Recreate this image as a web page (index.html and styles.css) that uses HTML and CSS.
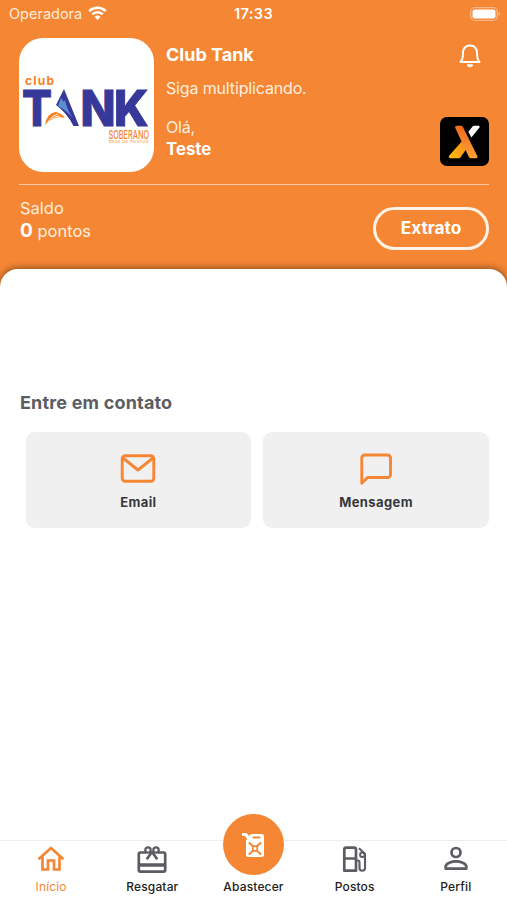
FILE: index.html
```html
<!DOCTYPE html>
<html lang="pt-BR">
<head>
  <meta charset="UTF-8" />
  <meta name="viewport" content="width=device-width, initial-scale=1.0"/>
  <title>Club Tank</title>
  <link rel="stylesheet" href="styles.css">
</head>
<body>

<header class="header">
  <div class="status-bar">
    <div class="carrier">
      <span>Operadora</span>
      <svg width="19" height="15" viewBox="0 0 19 15">
        <g fill="none" stroke="#fff" stroke-width="2.7">
          <path d="M1.2 5.1a12 12 0 0 1 16.6 0"/>
          <path d="M4.2 8.4a7.6 7.6 0 0 1 10.6 0"/>
        </g>
        <path d="M9.5 14l-3-3.1a4.3 4.3 0 0 1 6 0z" fill="#fff"/>
      </svg>
    </div>
    <div class="clock">17:33</div>
    <svg class="battery" width="31" height="14" viewBox="0 0 31 14">
      <rect x=".7" y=".7" width="26.6" height="12.6" rx="4" fill="none" stroke="#fff" stroke-opacity=".4" stroke-width="1.3"/>
      <rect x="2.5" y="2.5" width="23" height="9" rx="2.3" fill="#fff"/>
      <path d="M28.5 5v4q1.7-.6 1.7-2t-1.7-2z" fill="#fff" fill-opacity=".45"/>
    </svg>
  </div>

  <div class="brand">
    <div class="logo">
      <svg width="135" height="134" viewBox="0 0 135 134">
        <text class="logo-club" x="6" y="47" textLength="29">club</text>
        <g class="logo-tank">
          <text x="3" y="87.5" textLength="30" lengthAdjust="spacingAndGlyphs">T</text>
          <text x="61.5" y="87.5" textLength="35" lengthAdjust="spacingAndGlyphs">N</text>
          <text x="95" y="87.5" textLength="34.5" lengthAdjust="spacingAndGlyphs">K</text>
        </g>
        <path d="M45 51L60 88H54.5Q48 75 37 67z" fill="#36389a"/>
        <path d="M42 60l3 4 1-2q2 10 8 18-7-8-15-12z" fill="#5b8fd0"/>
        <path d="M26 87Q28 75 36.5 74q6 1 9.5 6-11-3-20 7z" fill="#f5821f"/>
        <path d="M29 84q4-7 10-8M33 81q4-3 8-3" fill="none" stroke="#fff" stroke-width=".9"/>
        <text class="logo-soberano" x="89.5" y="100.5" textLength="40.5" lengthAdjust="spacingAndGlyphs">SOBERANO</text>
        <text class="logo-rede" x="90" y="105" textLength="39.5">REDE DE POSTOS</text>
      </svg>
    </div>
    <div class="welcome">
      <h1>Club Tank</h1>
      <p class="slogan">Siga multiplicando.</p>
      <p class="hello">Olá,</p>
      <p class="user">Teste</p>
    </div>
    <div class="brand-side">
      <svg class="bell" width="22" height="24" viewBox="0 0 22 24" fill="none" stroke="#fff" stroke-width="2" stroke-linejoin="round" stroke-linecap="round">
        <path d="M1.5 18H20.5C18.3 16 18.1 14 18.1 10C18.1 4.5 15.5 1.5 11 1.5S3.9 4.5 3.9 10C3.9 14 3.7 16 1.5 18z"/>
        <path d="M9 21.2q2 2 4 0z" fill="#fff"/>
      </svg>
      <svg class="x-logo" width="49" height="49" viewBox="0 0 50 50">
        <defs>
          <linearGradient id="amber" x1="0" y1="1" x2="1" y2="0">
            <stop offset="0" stop-color="#ffc20e"/>
            <stop offset="1" stop-color="#f5821f"/>
          </linearGradient>
          <linearGradient id="flame" x1="0" y1="0" x2="0" y2="1">
            <stop offset="0" stop-color="#f26a1b"/>
            <stop offset="1" stop-color="#f9a13a"/>
          </linearGradient>
        </defs>
        <rect width="50" height="50" rx="7" fill="#000"/>
        <path d="M38.5 9h1q1.7.2.7 1.8L32 21l-3-6 3.8-4.8Q33.8 9 35 9z" fill="#fff"/>
        <path d="M23 24l5 7-6.5 9.2Q20.8 42 19 42h-8.5q-2.5-.5-1-2.7z" fill="url(#amber)"/>
        <path d="M17 9h4.5q1.3 0 2 1.5L38.2 40q.5 2-1.2 2h-5.7q-1.3 0-2-1.5L15.5 11q-.6-2 1.5-2z" fill="url(#flame)"/>
      </svg>
    </div>
  </div>

  <div class="balance">
    <div class="points">
      <div>Saldo</div>
      <div><b>0</b> pontos</div>
    </div>
    <button class="statement">Extrato</button>
  </div>
</header>

<main class="sheet">
  <h2>Entre em contato</h2>
  <div class="contacts">
    <a class="card">
      <svg width="36" height="30" viewBox="0 0 36 30" fill="none" stroke="#f58634" stroke-width="2.9" stroke-linejoin="round" stroke-linecap="round">
        <rect x="2.2" y="2.7" width="31.6" height="25.6" rx="3"/>
        <path d="M3 5L18 17 33 5"/>
      </svg>
      <span>Email</span>
    </a>
    <a class="card">
      <svg width="34" height="32" viewBox="0 0 34 32" fill="none" stroke="#f58634" stroke-width="2.9" stroke-linejoin="round">
        <path d="M2.8 30.2V5a3 3 0 0 1 3-3H28.5a3 3 0 0 1 3 3V21.5a3 3 0 0 1-3 3H8.5z"/>
      </svg>
      <span>Mensagem</span>
    </a>
  </div>
</main>

<nav class="tabs">
  <a class="tab active">
    <svg width="28" height="26" viewBox="0 0 28 26" fill="none" stroke="currentColor" stroke-width="2.7">
      <path d="M1.5 13.2L14 2 26.5 13.2"/>
      <path d="M5.5 10.5V23.5H11V14.5H17V23.5H22.5V10.5"/>
    </svg>
    <span>Início</span>
  </a>
  <a class="tab">
    <svg width="30" height="28" viewBox="0 0 30 28" fill="none" stroke="currentColor" stroke-width="2.7" stroke-linejoin="round">
      <path d="M9 6.5H3.5Q1.8 6.5 1.8 8.2V24Q1.8 25.7 3.5 25.7H26.5Q28.2 25.7 28.2 24V8.2Q28.2 6.5 26.5 6.5H21"/>
      <path d="M2 19H28" stroke-width="3.5"/>
      <circle cx="11" cy="4" r="2.7" stroke-width="2.3"/>
      <circle cx="19" cy="4" r="2.7" stroke-width="2.3"/>
      <path d="M13 6.5h4M15 6L9.7 13.2M15 6l5.3 7.2"/>
    </svg>
    <span>Resgatar</span>
  </a>
  <a class="tab">
    <div class="fuel">
      <svg width="25" height="26" viewBox="0 0 25 26">
        <path d="M1 1H5.5L8 4 10 2H20.5Q23 2 23 4.5V22.5Q23 25 20.5 25H7.5Q5 25 5 22.5V8.5L6 7 4 4H1z" fill="#fff"/>
        <g fill="none" stroke="#f58634">
          <path d="M12.5 5.5H18.5" stroke-width="2.2" stroke-linecap="round"/>
          <path d="M8.5 11L12 14.2M19.5 11L16 14.2M8.5 22L12 18.8M19.5 22L16 18.8" stroke-width="2" stroke-linecap="round"/>
          <rect x="11.8" y="14.2" width="4.4" height="4.6" rx=".8" stroke-width="1.7"/>
        </g>
      </svg>
    </div>
    <span>Abastecer</span>
  </a>
  <a class="tab">
    <svg width="26" height="27" viewBox="0 0 26 27" fill="none" stroke="currentColor" stroke-width="2.7" stroke-linejoin="round">
      <path d="M2.3 24.7V3.5Q2.3 1.7 4.3 1.7H12Q14 1.7 14 3.5V24.7zM2.3 12.5H14"/>
      <path d="M14 14.5H15.8Q17.5 14.5 17.5 16.2V22Q17.5 24.7 20.2 24.7T23 22V8L17 2.2" stroke-width="2.1"/>
      <circle cx="20.4" cy="8.8" r="2.3" stroke-width="2"/>
    </svg>
    <span>Postos</span>
  </a>
  <a class="tab">
    <svg width="24" height="25" viewBox="0 0 24 25" fill="none" stroke="currentColor" stroke-width="2.7" stroke-linejoin="round">
      <circle cx="12" cy="6.5" r="4.5"/>
      <path d="M1.7 22.7V20.5C1.7 17 8 15.4 12 15.4S22.3 17 22.3 20.5V22.7z"/>
    </svg>
    <span>Perfil</span>
  </a>
</nav>

</body>
</html>
```

FILE: styles.css
```css
:root {
  --orange: #f58634;
  --gray: #5c5d62;
  --card: #f0f0f0;
}

* {
  box-sizing: border-box;
}

body {
  margin: 0;
  height: 100vh;
  display: flex;
  flex-direction: column;
  overflow: hidden;
  font-family: Inter, 'Liberation Sans', sans-serif;
  background: #fff;
}

h1, h2, p {
  margin: 0;
}

svg {
  display: block;
}

/* header */
.header {
  height: 290px;
  flex: none;
  background: var(--orange);
  color: #fff;
}

.status-bar {
  display: grid;
  grid-template-columns: 1fr auto 1fr;
  align-items: center;
  height: 27px;
  padding: 0 6px 0 9px;
  font-size: 14.5px;
}

.carrier {
  display: flex;
  align-items: center;
  gap: 6px;
  color: #ffebd9;
}

.clock {
  margin-right: 3px;
  font-weight: 600;
  letter-spacing: 0.4px;
}

.battery {
  justify-self: end;
}

.brand {
  display: flex;
  margin: 11px 18px 0 19px;
  height: 147px;
  border-bottom: 1px solid #f9c8a2;
}

.logo {
  width: 135px;
  height: 134px;
  border-radius: 24px;
  background: #fff;
}

.logo-club {
  font-size: 12px;
  font-weight: 700;
  fill: #f5821f;
}

.logo-tank {
  font-size: 50px;
  font-weight: 800;
  fill: #36389a;
  stroke: #36389a;
  stroke-width: 1;
}

.logo-soberano {
  font-size: 12px;
  font-weight: 500;
  fill: #f58634;
}

.logo-rede {
  font-size: 4px;
  fill: #f58634;
}

.welcome {
  flex: 1;
  padding: 6px 0 0 12px;
  font-size: 16px;
  line-height: 22px;
}

.welcome h1 {
  font-size: 18px;
  font-weight: 700;
  line-height: 22px;
}

.slogan {
  margin-top: 11px;
  letter-spacing: -0.15px;
  color: #ffeedf;
}

.hello {
  margin-top: 17px;
  letter-spacing: -0.2px;
  color: #ffeedf;
}

.user {
  font-size: 16.8px;
  font-weight: 700;
}

.brand-side {
  display: flex;
  flex-direction: column;
  align-items: flex-end;
  padding-top: 6px;
}

.bell {
  margin-right: 8px;
}

.x-logo {
  margin-top: 49px;
}

.balance {
  display: flex;
  justify-content: space-between;
  padding: 12px 18px 0 20px;
}

.points {
  font-size: 16.5px;
  line-height: 22.5px;
  color: #ffeedf;
}

.points b {
  font-size: 19px;
  color: #fff;
}

.statement {
  width: 116px;
  height: 43px;
  margin-top: 10px;
  padding: 0 0 2px;
  border: 3px solid #fff3e8;
  border-radius: 22px;
  background: none;
  color: #fff;
  font: 700 17.3px Inter, sans-serif;
}

/* content */
.sheet {
  flex: 1;
  margin-top: -21px;
  padding: 123px 18px 0 20px;
  border-radius: 18px 18px 0 0;
  background: #fff;
  box-shadow: 0 -1px 7px rgba(0, 0, 0, 0.45);
}

.sheet h2 {
  color: var(--gray);
  font-size: 18px;
  font-weight: 700;
  letter-spacing: 0.18px;
  line-height: 22px;
}

.contacts {
  display: grid;
  grid-template-columns: 1fr 1fr;
  gap: 12px;
  margin: 18px 0 0 5.5px;
}

.card {
  display: flex;
  flex-direction: column;
  align-items: center;
  height: 96px;
  padding-top: 21px;
  border-radius: 9px;
  background: var(--card);
  color: #37383c;
  font-size: 13px;
  font-weight: 700;
  letter-spacing: 0.4px;
  line-height: 16px;
}

.card span {
  margin-top: auto;
  padding-bottom: 18px;
}

/* bottom navigation */
.tabs {
  display: grid;
  grid-template-columns: repeat(5, 101.2px);
  justify-content: center;
  height: 60px;
  flex: none;
  border-top: 1px solid #ececec;
  background: #fff;
  font-size: 12px;
  font-weight: 500;
  letter-spacing: 0.15px;
  line-height: 14px;
}

.tab {
  display: flex;
  flex-direction: column;
  align-items: center;
  justify-content: space-between;
  height: 53px;
  padding-top: 5px;
  color: var(--gray);
}

.tab span {
  color: #222;
}

.tab.active,
.tab.active span {
  color: var(--orange);
}

.tab.active span {
  font-weight: 400;
}

/* raised above the bar */
.fuel {
  display: flex;
  align-items: center;
  justify-content: center;
  width: 61px;
  height: 61px;
  flex: none;
  margin-top: -32px;
  border-radius: 50%;
  background: var(--orange);
}
```
